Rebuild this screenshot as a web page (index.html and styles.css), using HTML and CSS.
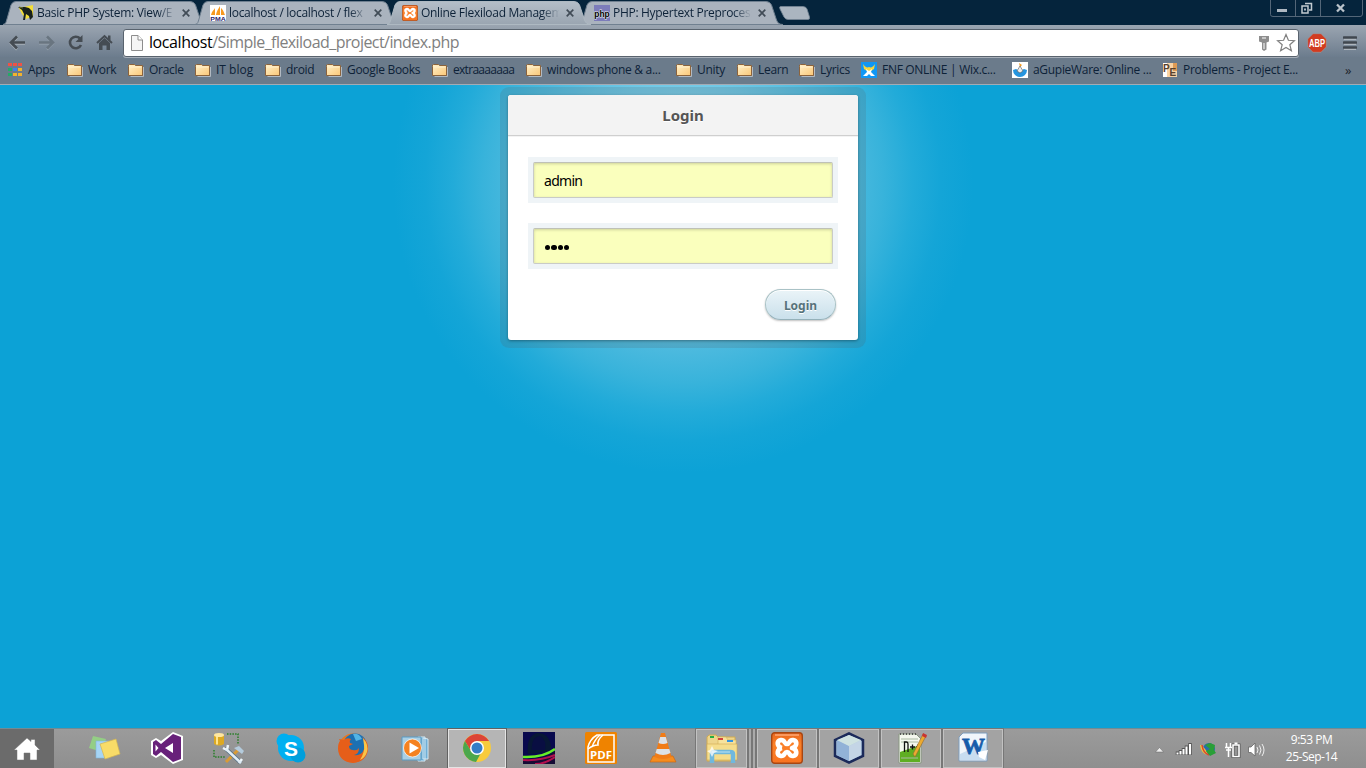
FILE: index.html
```
<!DOCTYPE html>
<html lang="en">
<head>
<meta charset="utf-8">
<title>Online Flexiload Management</title>
<link rel="stylesheet" href="styles.css">
</head>
<body>
<svg class="defs" width="0" height="0">
  <defs>
    <linearGradient id="foldg" x1="0" y1="0" x2="1" y2="1"><stop offset="0" stop-color="#fff0c8"/><stop offset="1" stop-color="#fbc878"/></linearGradient>
    <linearGradient id="actg" x1="0" y1="0" x2="0" y2="1"><stop offset="0" stop-color="#b4bec8"/><stop offset="1" stop-color="#9aa5b1"/></linearGradient>
    <linearGradient id="xg" x1="0" y1="0" x2="0" y2="1"><stop offset="0" stop-color="#e9661d"/><stop offset=".4" stop-color="#fb8128"/><stop offset="1" stop-color="#f87320"/></linearGradient>
    <symbol id="folder" viewBox="0 0 16 16"><path d="M2.5 14.500H15.500V5" fill="none" stroke="#b2bac2"/><path d="M.5 4.500V3l1-.5h5l1 1h7V13.500H.5z" fill="url(#foldg)" stroke="#8b633c"/><path d="M1.500 5H13.500" stroke="#fff0ce"/></symbol>
    <symbol id="tab" viewBox="0 0 204 25"><path d="M0 24.500C3 24 3 22 4 19L8 5Q9.500 1.500 13 1.500H187Q191 1.500 192.500 5L197.500 20Q199 24.500 204 24.500z"/></symbol>
    <symbol id="xampp" viewBox="0 0 32 32"><rect x=".7" y=".7" width="30.600" height="30.600" rx="3" fill="url(#xg)" stroke="#a84612" stroke-width="1.400"/><path d="M4 3H28" stroke="#ffa874" stroke-width="1.500"/><path d="M11 16C6 15 5 9 10 8C14 7.500 13 12 16 12S18 7.500 22 8C27 9 26 15 21 16C26 17 27 23 22 24C18 24.500 19 20 16 20S14 24.500 10 24C5 23 6 17 11 16" fill="none" stroke="#fff" stroke-width="4.600" stroke-linejoin="round"/></symbol>
  </defs>
</svg>
<div class="browser">
  <header class="tabstrip">
    <div class="tab">
      <svg class="tab-bg" width="204" height="25"><use href="#tab"/></svg>
      <svg class="fav" viewBox="0 0 16 16"><path d="M1 3L15 0V11L8 14L4 9z" fill="#f3df38"/><path d="M0 2L7 2L11 3L14 6L15 12L12 15L11 11L8 9L7 15L5 15L6 9L4 5z" fill="#17211e"/><path d="M1 2L5 3" stroke="#6f762b"/></svg>
      <span class="title">Basic PHP System: View/E</span><svg class="close" viewBox="0 0 8 8"><path d="M.7 .7L7.300 7.300M7.300 .7L.7 7.300"/></svg>
    </div>
    <div class="tab">
      <svg class="tab-bg" width="204" height="25"><use href="#tab"/></svg>
      <svg class="fav" viewBox="0 0 16 16"><path fill="#fff" d="M0 0H16V16H0z"/><path d="M1 10C2 6 4 5 5 3V10zM6 10C7 5 9 3 10 1V10zM11 10V3C14 6 14 8 15 10z" fill="#f79a20"/><text x=".3" y="16" textLength="15.400" lengthAdjust="spacingAndGlyphs" class="pma">PMA</text></svg>
      <span class="title">localhost / localhost / flex</span><svg class="close" viewBox="0 0 8 8"><path d="M.7 .7L7.300 7.300M7.300 .7L.7 7.300"/></svg>
    </div>
    <div class="tab tab-active">
      <svg class="tab-bg" width="204" height="25"><use href="#tab"/></svg>
      <svg class="fav"><use href="#xampp"/></svg>
      <span class="title">Online Flexiload Managem</span><svg class="close" viewBox="0 0 8 8"><path d="M.7 .7L7.300 7.300M7.300 .7L.7 7.300"/></svg>
    </div>
    <div class="tab">
      <svg class="tab-bg" width="204" height="25"><use href="#tab"/></svg>
      <svg class="fav" viewBox="0 0 16 16"><path fill="#7c7cba" d="M0 0H16V16H0z"/><text x=".3" y="11.500" textLength="15.400" lengthAdjust="spacingAndGlyphs" class="php">php</text></svg>
      <span class="title">PHP: Hypertext Preprocess</span><svg class="close" viewBox="0 0 8 8"><path d="M.7 .7L7.300 7.300M7.300 .7L.7 7.300"/></svg>
    </div>
    <svg class="newtab" width="32" height="16"><path d="M1.500 1.500H24Q27 1.500 28 4L30.500 12Q31 14.500 29 14.500H9Q6.500 14.500 5 12L1 4Q0 1.500 1.500 1.500z" fill="#abb5c0" stroke="#778696" stroke-width=".8"/></svg>
    <svg class="winctl" width="94" height="18" fill="none"><path d="M.5 0V14.500Q.5 16.500 3 16.500H90Q92.500 16.500 92.500 14V0M25.500 0V16M50.500 0V16" stroke="#536678"/><path d="M7 10.500H17" stroke="#aeb8c2" stroke-width="3"/><path d="M32 6H38V13H32zM35 3.500H41.500V10H39" stroke="#c2cad1" stroke-width="1.500"/><path d="M34 9.500H36" stroke="#aeb8c2" stroke-width="2"/><path d="M67 4.500L74 11.500M74 4.500L67 11.500" stroke="#bac3cb" stroke-width="2.300"/></svg>
  </header>
  <nav class="toolbar">
    <svg class="navicons" width="123" height="32" viewBox="0 25 123 32" fill="none">
      <path d="M11 43.500H25M17 37.500L11 43.500L17 49.500" stroke="#a8b0b8" stroke-width="2.500"/>
      <path d="M11 42.500H25M17 36.500L11 42.500L17 48.500" stroke="#454c53" stroke-width="2.600"/>
      <path d="M39 43.500H53M47 37.500L53 43.500L47 49.500" stroke="#98a3ae" stroke-width="2"/>
      <path d="M39 42.500H53M47 36.500L53 42.500L47 48.500" stroke="#697580" stroke-width="2.600"/>
      <path d="M80 38.500A5.800 5.800 0 1 0 81 45" stroke="#454c53" stroke-width="2.600"/><path d="M82.500 35V42H75.500z" fill="#454c53"/>
      <path d="M97 43L104.500 36L112 43" stroke="#454c53" stroke-width="2"/><path d="M99 43L104.500 38L110 43V50H106.500V45.500H102.500V50H99zM108 35.500H110.500V40H108z" fill="#454c53"/>
    </svg>
    <div class="omnibox">
      <svg width="14" height="18" viewBox="0 0 14 18"><path d="M1.500 1.500H8L12.500 6V16.500H1.500z" fill="#f5f5f5" stroke="#8d8d8d"/><path d="M8 1.500V6H12.500" fill="#fff" stroke="#8d8d8d"/></svg>
      <span class="url"><b>localhost</b>/Simple_flexiload_project/index.php</span>
      <svg class="key" width="12" height="17" viewBox="0 0 12 17"><path d="M1 1H11V6.500L8.500 7.500V14.500L6 16L4 14.500V7.500L1 6.500z" fill="#8e8e8e"/><path d="M4 3H8M6 8V14" stroke="#fff"/></svg>
      <svg class="star" width="20" height="20" viewBox="0 0 20 20"><path d="M10 1.500L12.400 7.300L18.400 7.700L13.800 11.700L15.400 17.800L10 14.500L4.600 17.800L6.200 11.700L1.600 7.700L7.600 7.300z" fill="#fff" stroke="#818181" stroke-width="1.200"/></svg>
    </div>
    <svg class="abp" width="20" height="20" viewBox="0 0 20 20"><path d="M6 .7H14L19.300 6V14L14 19.300H6L.7 14V6z" fill="#d23b20" stroke="#9e9da0" stroke-width=".6"/><text x="2" y="13.700" textLength="16" lengthAdjust="spacingAndGlyphs">ABP</text></svg>
    <svg class="menu" width="14" height="16" viewBox="0 0 14 16"><path d="M1 3.500H13M1 8.500H13M1 13.500H13" stroke="#aeb6be" stroke-width="3"/><path d="M1 2.500H13M1 7.500H13M1 12.500H13" stroke="#40474f" stroke-width="2.700" stroke-linecap="round"/></svg>
  </nav>
  <nav class="bookmarks">
    <a class="bm"><svg viewBox="0 0 16 16"><path d="M0 1H4V4H0zM5 1H9V4H5zM10 1H14V4H10z" fill="#ef5246"/><path d="M0 6H4V9H0zM0 11H4V14H0z" fill="#25a968"/><path d="M5 6H9V9H5z" fill="#3c82ec"/><path d="M10 6H14V9H10zM5 11H9V14H5zM10 11H14V14H10z" fill="#f3b32c"/></svg><span>Apps</span></a>
    <a class="bm"><svg><use href="#folder"/></svg><span>Work</span></a>
    <a class="bm"><svg><use href="#folder"/></svg><span>Oracle</span></a>
    <a class="bm loose"><svg><use href="#folder"/></svg><span>IT blog</span></a>
    <a class="bm"><svg><use href="#folder"/></svg><span>droid</span></a>
    <a class="bm"><svg><use href="#folder"/></svg><span>Google Books</span></a>
    <a class="bm tight"><svg><use href="#folder"/></svg><span>extraaaaaaa</span></a>
    <a class="bm"><svg><use href="#folder"/></svg><span>windows phone &amp; a...</span></a>
    <a class="bm"><svg><use href="#folder"/></svg><span>Unity</span></a>
    <a class="bm"><svg><use href="#folder"/></svg><span>Learn</span></a>
    <a class="bm"><svg><use href="#folder"/></svg><span>Lyrics</span></a>
    <a class="bm"><svg viewBox="0 0 16 16"><path fill="#1197f5" d="M0 0H16V16H0z"/><path d="M2 2C4 5 6 6 8 5C10 6 12 5 14 2L13 7L10 9H6L3 7z" fill="#f8d63d"/><path d="M5 7L8 9L11 7L10 10L14 14H10L8 12L6 14H2L6 10z" fill="#fff"/></svg><span>FNF ONLINE | Wix.c...</span></a>
    <a class="bm"><svg viewBox="0 0 16 16"><path fill="#fff" d="M0 0H16V16H0z"/><path d="M1 8A7 7 0 0 0 15 8L12 7L8 9L4 7z" fill="#2595df"/><path d="M7 1L10 3L8 5z" fill="#f39b20"/><path d="M8 4L5 9L8 11L11 9z" fill="#eee" stroke="#555" stroke-width=".6"/></svg><span>aGupieWare: Online ...</span></a>
    <a class="bm"><svg viewBox="0 0 16 16"><path fill="#f9d3a4" d="M1 1H15V15H1z"/><path fill="#fff" d="M1 1H5V15H1z"/><path fill="#df9b55" d="M11 1H15V9H11z"/><text x="1" y="10" class="pe">P</text><text x="7.500" y="14" class="pe">E</text></svg><span>Problems - Project E...</span></a>
    <span class="more">»</span>
  </nav>
</div>
<main class="page">
  <form class="card">
    <h1>Login</h1>
    <div class="fields">
      <div class="ring"><input class="field" type="text" value="admin"></div>
      <div class="ring"><div class="field dots"><i></i><i></i><i></i><i></i></div></div>
      <button type="button">Login</button>
    </div>
  </form>
</main>
<footer class="taskbar">
  <div class="home"><svg width="28" height="24" viewBox="0 0 28 24"><path d="M14 1L18 4.500V2.500H22V8L27 13H24V23H17V16H11V23H4V13H1z" fill="#fff" stroke="#777" stroke-width=".5"/></svg></div>
  <div class="apps">
    <div class="app"><svg viewBox="0 0 32 32"><path d="M4 4L17 7L13 20L0 16z" fill="#94ce85"/><path d="M7 9L20 9V26H7z" fill="#a6d4f4" stroke="#81b6dc" stroke-width=".6"/><path d="M11 12L27 7L31 22L16 27z" fill="#f8dc68" stroke="#d2b552" stroke-width=".7"/></svg></div>
    <div class="app"><svg viewBox="0 0 32 32"><path d="M22 0L32 4V28L22 32L10 23L5 26L0 23V9L5 6L10 9z" fill="#fff"/><path d="M22 2L30 5V27L22 30L10 20L5 24L2 22V10L5 8L10 12zM22 11L14 16L22 21zM4.500 12.500V19.500L7.500 16z" fill="#68217a" fill-rule="evenodd"/></svg></div>
    <div class="app"><svg viewBox="0 0 32 32"><path d="M1 3V12Q6 15 11 12V3z" fill="#dda922"/><path d="M3 4V12.500H5V4z" fill="#ffe38b"/><ellipse cx="6" cy="3" rx="5" ry="2" fill="#ffe7a0"/><path d="M14 2H25V12M1 18V25H12" fill="none" stroke="#287f28" stroke-width="1.500" stroke-dasharray="1.500 1.200"/><path d="M13 30L26 17" stroke="#d99b35" stroke-width="3"/><path d="M21 16L26 14L31 19L29 22L25 19z" fill="#b4cbdc"/><path d="M12 16L28 31" stroke="#526f84" stroke-width="4"/><path d="M10 16L14 18L15 13M26 31L29 27" fill="none" stroke="#eef6fb" stroke-width="2.500"/><path d="M13 17L28 31" stroke="#e1edf5" stroke-width="2.500"/></svg></div>
    <div class="app"><svg viewBox="0 0 32 32"><circle cx="16" cy="16" r="13" fill="#00aff0"/><circle cx="9" cy="9" r="7.500" fill="#00aff0"/><circle cx="23" cy="23" r="7.500" fill="#009fdc"/><text x="16" y="23.500" text-anchor="middle" class="skype">S</text></svg></div>
    <div class="app"><svg viewBox="0 0 32 32"><circle cx="16" cy="16" r="14.500" fill="#e87720"/><circle cx="18" cy="13" r="11.500" fill="#1c70b2"/><path d="M16 2Q22 1 25 7L19 9z" fill="#53b4e5"/><path d="M2 7L7 8Q10 5 14 7Q12 9 13 11L16 12L12 14Q12 18 16 18Q20 19 22 16Q22 22 17 23Q25 24 27 17Q29 11 25 5Q32 10 31 18Q29 30 16 31Q2 30 1 17Q1 11 3 9z" fill="#e65e19"/><path d="M26 6Q32 13 30 20Q28 26 23 28Q28 20 27 13z" fill="#f8c548"/></svg></div>
    <div class="app"><svg viewBox="0 0 32 32"><path d="M24 6L29 7V27H24zM19 5L26 5V29H19z" fill="#6faed5" stroke="#d5eaf5" stroke-width="1"/><path d="M3 5H22V28H3z" fill="#a9cfe4" stroke="#5a9bc3"/><circle cx="13.500" cy="16" r="9" fill="#f58220" stroke="#fff" stroke-width=".7"/><path d="M10.500 10.500L20 16L10.500 21.500z" fill="#fff"/></svg></div>
    <div class="app current"><svg viewBox="0 0 32 32"><circle cx="16" cy="16" r="14" fill="#f8cb3c"/><path d="M3.900 9A14 14 0 0 1 28.100 9H16L10 19z" fill="#dc4437"/><path d="M3.900 9A14 14 0 0 0 15 30L21 19L10 19z" fill="#4ba74c"/><circle cx="16" cy="16" r="7" fill="#fff"/><circle cx="16" cy="16" r="5.500" fill="#357dc7"/></svg></div>
    <div class="app"><svg viewBox="0 0 32 32"><path d="M0 0H32V32H0z" fill="#08094d"/><path d="M5 22Q3 4 14 1Q28 1 28 17L24 20z" fill="#071735"/><path d="M9 18Q8 5 17 4Q24 8 22 18z" fill="#090e42"/><path d="M0 27Q20 29 32 19V32H0z" fill="#160b35"/><path d="M0 25Q20 26 32 17" fill="none" stroke="#65ee26" stroke-width="2.500"/><path d="M0 28Q18 29 32 23M12 32Q22 32 32 25" fill="none" stroke="#b30f4d" stroke-width="2"/></svg></div>
    <div class="app"><svg viewBox="0 0 32 32"><rect width="32" height="32" rx="1.500" fill="#ef8300"/><path d="M3 30V15Q5 7 12 3H29V30z" fill="none" stroke="#fff" stroke-width="1.500"/><path d="M3 17Q8 13 13 13Q12 8 18 3M7 15Q10 7 15 3" fill="none" stroke="#fff" stroke-width="1.500"/><text x="5" y="27" textLength="22" lengthAdjust="spacingAndGlyphs" class="pdf">PDF</text></svg></div>
    <div class="app"><svg viewBox="0 0 32 32"><path d="M6 24H26L29 30H3z" fill="#f68c1e" stroke="#c86716" stroke-width=".7"/><path d="M14 1H18L24.500 25Q16 29 7.500 25z" fill="#f17c17"/><path d="M13.200 5H18.800L20.500 11Q16 13 11.500 11zM9.700 17H22.300L23.500 21Q16 25 8.500 21z" fill="#dde1e6"/></svg></div>
  </div>
  <div class="windows">
    <div class="stack"><svg viewBox="0 0 32 32"><path d="M1 5L3 3H10L12 5H29V29H1z" fill="#eed58b" stroke="#d0aa51"/><path d="M12 8V5H20L22 8H30V28H12z" fill="#f7e29c" stroke="#d7b85d" stroke-width=".7"/><path d="M1 12H31V28H1z" fill="#f5dd8c" stroke="#d0aa51" stroke-width=".6"/><path d="M4 5H8" stroke="#25ae43" stroke-width="2"/><path d="M12 7H17" stroke="#d3453d" stroke-width="2"/><path d="M21 9H27" stroke="#3494e0" stroke-width="2"/><path d="M6 31V22Q6 20 8 20H24Q27 20 27 22V31" fill="none" stroke="#70b8dd" stroke-width="4.500"/><path d="M6 20H24" stroke="#bfe5f5" stroke-width="1"/><path d="M6 14L8 18L12 19L8 21L6 25L4 21L1 19L4 18z" fill="#fff" opacity=".75"/></svg></div><span class="sheet"></span><span class="sheet"></span>
    <div class="win"><svg><use href="#xampp"/></svg></div>
    <div class="win"><svg viewBox="0 0 32 32"><path d="M16 1.500L30 8V24L16 30.500L2 24V8z" fill="#a9c3de" stroke="#1b2a5a" stroke-width="2.500"/><path d="M4 8L16 14V29L4 23z" fill="#92b2d7"/><path d="M16 14L28 8V23L16 29z" fill="#c4d5e6"/><path d="M4 8L16 3L28 8L16 14z" fill="#cfe2e1"/></svg></div>
    <div class="win"><svg viewBox="0 0 32 32"><path d="M4 2H21L26 7V31H4z" fill="#f5f8ef" stroke="#889780"/><path d="M5 20L25 13V30H5z" fill="#5fae22"/><path d="M6 7H23M6 10H23M6 26H23" stroke="#aab9a2"/><path d="M9.500 20V10H11.500Q13 10 13 12V20M15 15H20M17.500 12.500V17.500M21 15H25M23 12.500V17.500" fill="none" stroke="#111" stroke-width="1.300"/><path d="M20 25L31 4L28 2L18 22z" fill="#ecaa30" stroke="#8f6832" stroke-width=".6"/><path d="M28 1L32 3L31 6L27 4z" fill="#c93431"/><path d="M5 2H21" stroke="#555" stroke-width="2" stroke-dasharray="1 2"/></svg></div>
    <div class="win"><svg viewBox="0 0 32 32"><path d="M6 1H30V29H2V5z" fill="#f1f6fb" stroke="#7d9dbe"/><path d="M3 22L29 10V28H3z" fill="#c8ddf0"/><text x="5" y="21.500" textLength="23" lengthAdjust="spacingAndGlyphs" class="word">W</text><path d="M21 20L31 18L28 28L22 25z" fill="#fff"/></svg></div>
  </div>
  <div class="tray">
    <svg width="130" height="24" viewBox="1146 736 130 24" fill="none"><path d="M1156.500 751L1160.500 746.500L1164.500 751z" fill="#eee" stroke="#666" stroke-width=".5"/><path d="M1178.500 754V750.500M1181.500 754V749M1184.500 754V747M1187.500 754V744.500M1191 754V742" stroke="#555" stroke-width="3.500"/><path d="M1178.500 753.500V751.500M1181.500 753.500V750M1184.500 753.500V748M1187.500 753.500V745.500M1191 753.500V743" stroke="#fff" stroke-width="2"/><circle cx="1210" cy="748" r="6" fill="#286da9"/><path d="M1202 744Q1208 749 1209 754Q1202 753 1201 744z" fill="#efc53b"/><path d="M1203 744Q1204 752 1210 754" stroke="#d94432" stroke-width="1.500"/><path d="M1206 744L1211 742L1216 744L1215 749L1217 752L1211 755L1207 750L1211 748z" fill="#299f37"/><path d="M1234 744H1240V755.500H1234z" stroke="#555" stroke-width="3"/><path d="M1234 744H1240V755.500H1234z" stroke="#fff" stroke-width="1.600"/><path d="M1235.500 742.500H1238.500" stroke="#fff" stroke-width="2"/><path d="M1227.500 742V746M1231.500 742V746M1226 746.500H1233M1227 749H1232M1229.500 747V756" stroke="#fff" stroke-width="1.500"/><path d="M1249.500 746H1252L1256 742V755L1252 751.500H1249.500z" fill="#fff" stroke="#666" stroke-width=".8"/><path d="M1258 746Q1260 749 1258 752M1260.500 744.500Q1263.500 749 1260.500 753.500M1263 743Q1267 749 1263 755" stroke="#eee"/></svg>
    <div class="clock"><span>9:53 PM</span><span class="date">25-Sep-14</span></div>
  </div>
</footer>
</body>
</html>
```
FILE: styles.css
```
* { box-sizing: border-box; }
body { margin: 0; width: 1366px; height: 768px; overflow: hidden; display: flex; flex-direction: column; font-family: "Open Sans", "Noto Sans", sans-serif; font-size: 12px; color: #0d2238; }
.defs { position: absolute; }
.browser { height: 85px; flex: none; }
.tabstrip { height: 25px; background: #05243c; display: flex; padding-left: 3px; }
.tab { position: relative; width: 192px; height: 25px; display: flex; align-items: center; padding-left: 14px; flex: none; z-index: 1; }
.tab-bg { position: absolute; left: 0; top: 0; z-index: -1; fill: #aab3be; stroke: #708090; }
.tab-active { z-index: 2; }
.tab-active .tab-bg { fill: url(#actg); stroke: #aeb9c2; }
.fav { width: 16px; height: 16px; flex: none; margin-left: 1px; }
.title { width: 140px; margin-left: 3px; white-space: nowrap; line-height: 18px; letter-spacing: -.3px; -webkit-mask-image: linear-gradient(90deg, #000 86%, transparent 99%); mask-image: linear-gradient(90deg, #000 86%, transparent 99%); }
.close { width: 8px; height: 8px; margin-left: 5px; flex: none; stroke: #414c57; stroke-width: 1.700; fill: none; }
.newtab { margin: 5px 0 0 8px; }
.winctl { margin: 0 2px 0 auto; }
.pma { font: bold 6px "Liberation Sans", sans-serif; fill: #29246c; }
.php { font: bold 9px "Liberation Sans", sans-serif; fill: #000; stroke: #eee; stroke-width: 1px; paint-order: stroke; }
.toolbar { height: 32px; display: flex; align-items: flex-start; background: linear-gradient(#9ba5b1, #6c7c8d); }
.omnibox { width: 1176px; height: 28px; margin-top: 4px; border: 1px solid #59636e; border-radius: 3px; background: #fff; display: flex; align-items: center; padding-left: 6px; padding-right: 2px; box-shadow: 0 1px #a7afb9; }
.url { font-size: 16px; line-height: 24px; height: 26px; color: #808080; margin-left: 5px; letter-spacing: -.56px; }
.url b { color: #000; font-weight: normal; letter-spacing: -.42px; }
.key { margin-left: auto; }
.star { margin-left: 6px; }
.abp { margin: 8px 0 0 8px; }
.abp text { font: bold 10px "Liberation Sans", sans-serif; fill: #fff; }
.menu { margin: 10px 0 0 16px; }
.bookmarks { height: 28px; background: #6b7b8b; border-bottom: 1px solid #a3abb4; display: grid; grid-template-columns: 59px 61px 67px 70px 61px 106px 94px 150px 61px 62px 62px 151px 150px 183px 20px; padding: 0 0 1px 8px; align-items: center; }
.bm { display: flex; align-items: center; white-space: nowrap; letter-spacing: -.3px; line-height: 18px; }
.bm svg { width: 16px; height: 16px; flex: none; margin-right: 5px; }
.bm:first-child svg { margin-right: 4px; }
.loose { letter-spacing: 0; }
.tight { letter-spacing: -.7px; }
.more { color: #20242a; font-size: 13px; }
.pe { font: bold 10px "Liberation Sans", sans-serif; fill: #58412f; }
.page { height: 643px; display: flex; justify-content: center; align-items: flex-start; padding-top: 10px; background: radial-gradient(circle at 683px 98px, #a5dff2 0, #72c9e6 100px, #4ab9de 170px, #38b3db 200px, #22abd9 230px, #14a5d7 258px, #0ca2d6 290px); }
.card { margin: 0; width: 350px; height: 245px; background: #fff; border-radius: 3px; box-shadow: 0 1px 3px rgba(0,0,0,.35), 0 0 0 8px rgba(80,100,110,.2); }
h1 { margin: 0; height: 41px; background: #f3f3f3; border-bottom: 1px solid #cfcfcf; border-radius: 3px 3px 0 0; text-align: center; font: bold 15px/41px "Noto Sans", sans-serif; color: #555; text-shadow: 0 1px #fff; box-shadow: 0 1px #f3f3f3; }
.fields { padding: 21px 20px 0; display: flex; flex-direction: column; gap: 20px; }
.ring { padding: 5px; height: 46px; background: #eff4f7; }
.field { display: flex; align-items: center; width: 300px; height: 36px; padding: 0 10px; border: 1px solid #c9cbc7; border-top-color: #bfc1b7; border-radius: 2px; background: #faffbd; box-shadow: inset 0 1px 3px rgba(0,0,0,.18); font: 14px "Noto Sans", sans-serif; letter-spacing: -.7px; color: #000; outline: 0; }
.dots { gap: 1px; padding-left: 11px; padding-top: 3px; }
.dots i { width: 5.300px; height: 5.300px; background: #000; border-radius: 50%; }
button { align-self: flex-end; width: 71px; height: 31px; margin: 0 2px 0 0; padding: 1px 0 0; border: 1px solid #a9c2c6; border-bottom-color: #95b1ba; border-radius: 16px; background: linear-gradient(#eaf4f8, #cae0eb); box-shadow: inset 0 1px #fff, 0 1px 2px rgba(0,0,0,.25); font: bold 12px "Noto Sans", sans-serif; color: #56727a; text-shadow: 0 1px #fff; }
.taskbar { height: 40px; display: flex; background: linear-gradient(#9b9b9b, #8f8f8f); border-top: 1px solid #718b94; }
.home { width: 54px; display: grid; place-items: center; background: #6b6b6b; }
.apps { display: flex; margin-left: 20px; }
.app { width: 62px; display: grid; place-items: center; padding-bottom: 1px; }
.app svg, .win svg, .stack svg { width: 32px; height: 32px; }
.skype { font: bold 21px "Liberation Sans", sans-serif; fill: #fff; }
.pdf { font: bold 11px "Open Sans", sans-serif; fill: #fff; }
.word { font: bold 24px "Liberation Serif", serif; fill: #175caa; stroke: #175caa; stroke-width: .8px; }
.current { width: 58px; margin: 0 2px; background: #b5b5b5; border: 1px solid #e4e4e4; outline: 1px solid #626262; }
.windows { display: flex; margin-left: 2px; gap: 2px; }
.win, .stack { width: 60px; display: grid; place-items: center; padding-bottom: 1px; background: #a3a3a3; border: 1px solid #c2c2c2; box-shadow: 0 0 0 1px #777; }
.stack { width: 51px; }
.sheet { width: 2px; background: #aaa; outline: 1px solid #777; }
.tray { margin-left: auto; display: flex; align-items: center; }
.clock { width: 73px; height: 39px; margin-right: 18px; padding-bottom: 1px; display: flex; flex-direction: column; justify-content: center; text-align: center; line-height: 17px; color: #fff; white-space: nowrap; letter-spacing: -.5px; }
```
